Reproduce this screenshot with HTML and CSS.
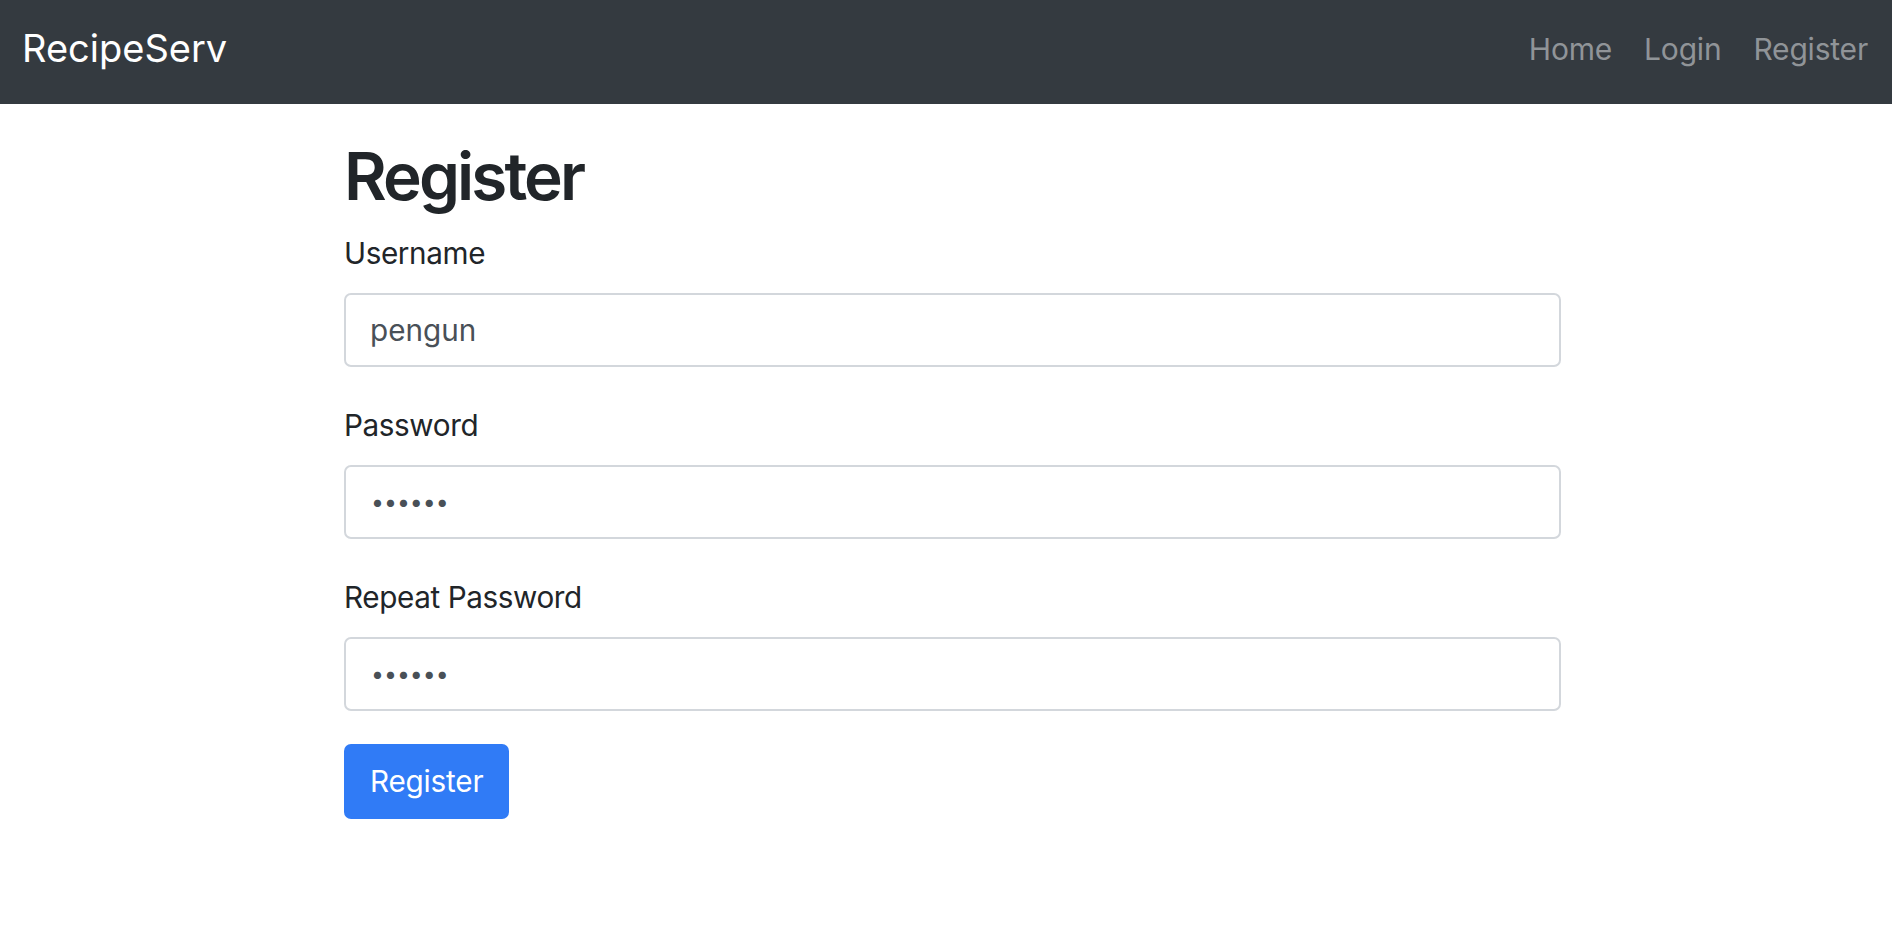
FILE: index.html
```html
<!DOCTYPE html>
<html lang="en">
<head>
<meta charset="utf-8">
<title>RecipeServ - Register</title>
<link rel="stylesheet" href="styles.css">
</head>
<body>
<nav class="navbar">
  <a class="brand" href="#">RecipeServ</a>
  <ul class="nav-links">
    <li><a class="nav-link" href="#">Home</a></li>
    <li><a class="nav-link" href="#">Login</a></li>
    <li><a class="nav-link nav-link-last" href="#">Register</a></li>
  </ul>
</nav>
<main class="container">
  <h1 class="title">Register</h1>
  <form class="form">
    <label class="label" for="username">Username</label>
    <input class="input" id="username" type="text" value="pengun">
    <label class="label" for="password">Password</label>
    <input class="input input-pw" id="password" type="password" value="123456">
    <label class="label" for="password2">Repeat Password</label>
    <input class="input input-pw" id="password2" type="password" value="123456">
    <button class="btn" type="button">Register</button>
  </form>
</main>
</body>
</html>
```

FILE: styles.css
```css
* { box-sizing: border-box; }
html, body { margin: 0; padding: 0; background: #fff; }
body {
  font-family: Inter, "Noto Sans", "Liberation Sans", sans-serif;
  color: #212529;
}
.navbar {
  height: 104px;
  background: #343a40;
  display: flex;
  align-items: flex-start;
  justify-content: space-between;
  padding: 0 24px 0 22px;
}
.brand {
  margin-top: 20px;
  font-size: 38px;
  line-height: 56px;
  color: #fff;
  text-decoration: none;
}
.nav-links {
  list-style: none;
  margin: 25px 0 0;
  padding: 0;
  display: flex;
}
.nav-link {
  display: block;
  font-size: 30px;
  line-height: 48px;
  letter-spacing: -0.2px;
  padding: 0 16px;
  color: #909498;
  text-decoration: none;
}
.nav-link-last { padding-right: 0; }
.container {
  width: 1217px;
  margin-left: 344px;
  padding-top: 32.6px;
}
.title {
  margin: 0 0 15.6px;
  font-size: 65.6px;
  line-height: 79px;
  font-weight: 600;
  letter-spacing: -2.9px;
}
.form { display: flex; flex-direction: column; align-items: flex-start; }
.label {
  display: block;
  font-size: 29.7px;
  line-height: 44.6px;
  letter-spacing: -0.4px;
  margin-bottom: 17.5px;
}
.input {
  width: 100%;
  height: 74px;
  margin: 0 0 36px;
  padding: 0 24px;
  font-family: Inter, "Noto Sans", "Liberation Sans", sans-serif;
  font-size: 29.7px;
  color: #495057;
  background: #fff;
  border: 2px solid #d3d7dc;
  border-radius: 7px;
  outline: none;
}
.input-pw {
  font-size: 23px;
  padding-left: 25px;
}
.input:last-of-type { margin-bottom: 32.5px; }
.btn {
  height: 75px;
  padding: 0 26px;
  font-family: Inter, "Noto Sans", "Liberation Sans", sans-serif;
  font-size: 29.7px;
  letter-spacing: -0.2px;
  color: #fff;
  background: #307bf6;
  border: none;
  border-radius: 7px;
}
```
